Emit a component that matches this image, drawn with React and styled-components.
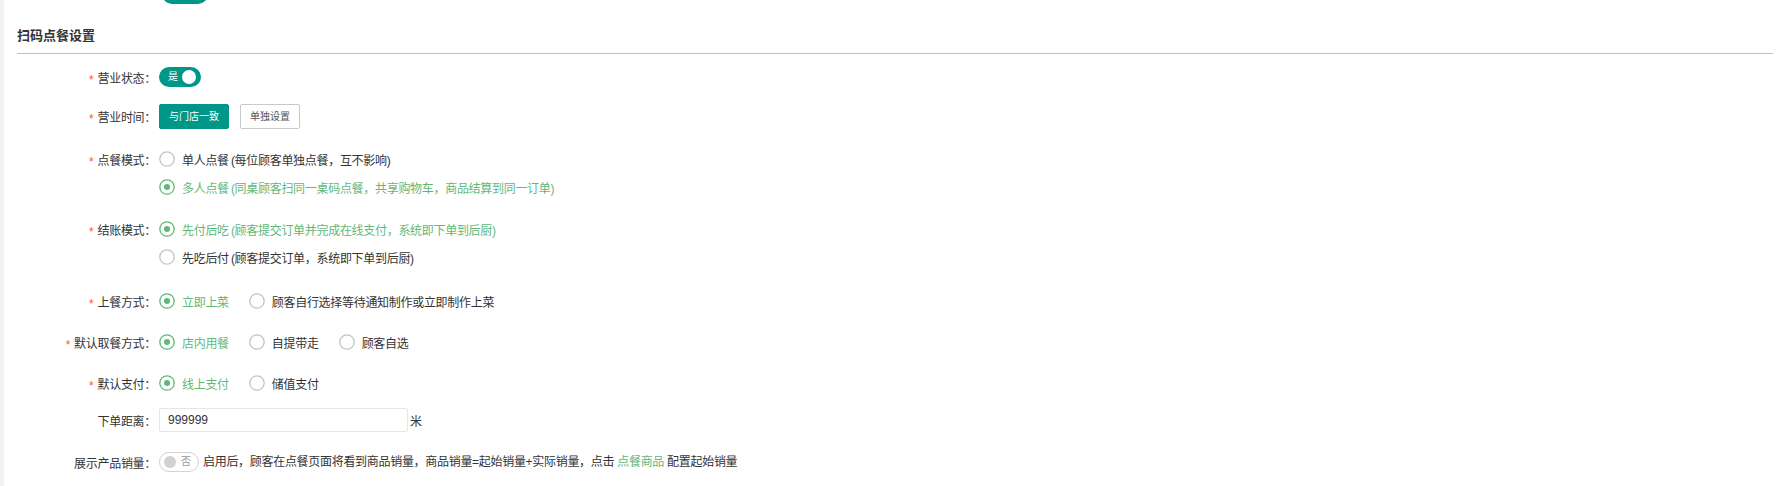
import React, { useState } from 'react'
import styled, { createGlobalStyle } from 'styled-components'

const TEAL = '#009688'
const GREEN = '#5FB878'

const GlobalStyle = createGlobalStyle`
  * { box-sizing: border-box; }
  html, body {
    margin: 0;
    padding: 0;
    background: #f2f2f2;
  }
  body {
    font-family: "Liberation Sans", "Noto Sans CJK SC", sans-serif;
    font-size: 12px;
    letter-spacing: -0.3px;
    color: #333;
    text-autospace: no-autospace;
    text-spacing-trim: space-all;
  }
`

function RadioGroup({ options, value, onChange, vertical }) {
    return (
        <Control $vertical={vertical}>
            {options.map((text, i) => (
                <Option key={text} $checked={value === i} onClick={() => onChange(i)}>
                    <RadioIcon width="16" height="16" viewBox="0 0 16 16">
                        <circle cx="8" cy="8" r="7.2" fill="#fff"
                            stroke={value === i ? GREEN : '#c2c2c2'} strokeWidth="1.3" />
                        {value === i && <circle cx="8" cy="8" r="3" fill={GREEN} />}
                    </RadioIcon>
                    {text}
                </Option>
            ))}
        </Control>
    )
}

function Switch({ on, onToggle, onText, offText }) {
    return (
        <SwitchBox $on={on} onClick={onToggle}>
            <SwitchText $on={on}>{on ? onText : offText}</SwitchText>
            <Knob $on={on} />
        </SwitchBox>
    )
}

function App() {
    const [open, setOpen] = useState(true)
    const [hours, setHours] = useState('store')
    const [orderMode, setOrderMode] = useState(1)
    const [payMode, setPayMode] = useState(0)
    const [serve, setServe] = useState(0)
    const [pickup, setPickup] = useState(0)
    const [payment, setPayment] = useState(0)
    const [distance, setDistance] = useState('999999')
    const [showSales, setShowSales] = useState(false)

    return (
        <Page>
            <GlobalStyle />
            <PrevRow><PrevPill /></PrevRow>
            <SectionTitle>扫码点餐设置</SectionTitle>
            <Form>
                <Item $gap={11}>
                    <Label><Star>*</Star>营业状态：</Label>
                    <Control>
                        <Switch on={open} onToggle={() => setOpen(!open)} onText="是" offText="否" />
                    </Control>
                </Item>
                <Item $gap={15}>
                    <Label><Star>*</Star>营业时间：</Label>
                    <Control>
                        <Button $primary={hours === 'store'} onClick={() => setHours('store')}>与门店一致</Button>
                        <Button $primary={hours === 'custom'} onClick={() => setHours('custom')}>单独设置</Button>
                    </Control>
                </Item>
                <Item $gap={14}>
                    <Label><Star>*</Star>点餐模式：</Label>
                    <RadioGroup vertical value={orderMode} onChange={setOrderMode} options={[
                        '单人点餐\u2009(每位顾客单独点餐，互不影响)',
                        '多人点餐\u2009(同桌顾客扫同一桌码点餐，共享购物车，商品结算到同一订单)',
                    ]} />
                </Item>
                <Item $gap={16}>
                    <Label><Star>*</Star>结账模式：</Label>
                    <RadioGroup vertical value={payMode} onChange={setPayMode} options={[
                        '先付后吃\u2009(顾客提交订单并完成在线支付，系统即下单到后厨)',
                        '先吃后付\u2009(顾客提交订单，系统即下单到后厨)',
                    ]} />
                </Item>
                <Item $gap={13}>
                    <Label><Star>*</Star>上餐方式：</Label>
                    <RadioGroup value={serve} onChange={setServe} options={[
                        '立即上菜',
                        '顾客自行选择等待通知制作或立即制作上菜',
                    ]} />
                </Item>
                <Item $gap={13}>
                    <Label><Star>*</Star>默认取餐方式：</Label>
                    <RadioGroup value={pickup} onChange={setPickup} options={['店内用餐', '自提带走', '顾客自选']} />
                </Item>
                <Item $gap={9}>
                    <Label><Star>*</Star>默认支付：</Label>
                    <RadioGroup value={payment} onChange={setPayment} options={['线上支付', '储值支付']} />
                </Item>
                <Item $gap={14}>
                    <Label>下单距离：</Label>
                    <Control>
                        <TextInput value={distance} onChange={(e) => setDistance(e.target.value)} />
                        <Unit>米</Unit>
                    </Control>
                </Item>
                <Item $gap={0}>
                    <Label>展示产品销量：</Label>
                    <Control>
                        <Switch on={showSales} onToggle={() => setShowSales(!showSales)} onText="是" offText="否" />
                        <Hint>启用后，顾客在点餐页面将看到商品销量，商品销量=起始销量+实际销量，点击 <HintLink href="#">点餐商品</HintLink> 配置起始销量</Hint>
                    </Control>
                </Item>
            </Form>
        </Page>
    )
}

const Page = styled.div`
    margin-left: 4px;
    min-height: 486px;
    background: #fff;
    padding: 0 6px 0 13px;
`

const PrevRow = styled.div`
    height: 4px;
    overflow: hidden;
    display: flex;
    align-items: flex-end;
    padding-left: 145px;
`

const PrevPill = styled.span`
    flex: none;
    width: 46px;
    height: 20px;
    border-radius: 10px;
    background: ${TEAL};
`

const SectionTitle = styled.h3`
    margin: 22px 0 0;
    padding-bottom: 7px;
    font-size: 13px;
    font-weight: bold;
    line-height: 20px;
    letter-spacing: 0;
    color: #333;
    border-bottom: 1px solid #c2c2c2;
`

const Form = styled.div`
    padding-top: 9px;
`

const Item = styled.div`
    display: flex;
    align-items: flex-start;
    margin-bottom: ${(p) => p.$gap}px;
`

const Label = styled.label`
    flex: none;
    display: flex;
    align-items: center;
    justify-content: flex-end;
    width: 142px;
    height: 28px;
    padding-right: 3px;
    white-space: nowrap;
    color: #333;
`

const Star = styled.span`
    height: 12px;
    margin: 6px 4px 0 0;
    line-height: 12px;
    color: #ff5722;
`

const Control = styled.div`
    display: flex;
    flex-direction: ${(p) => (p.$vertical ? 'column' : 'row')};
    align-items: ${(p) => (p.$vertical ? 'flex-start' : 'center')};
    min-height: 28px;
`

const Option = styled.label`
    display: flex;
    align-items: center;
    height: 28px;
    margin-right: 20px;
    white-space: nowrap;
    color: ${(p) => (p.$checked ? GREEN : '#333')};
    cursor: pointer;
`

const RadioIcon = styled.svg`
    flex: none;
    margin-right: 7px;
`

const SwitchBox = styled.span`
    flex: none;
    display: inline-flex;
    flex-direction: ${(p) => (p.$on ? 'row' : 'row-reverse')};
    justify-content: space-between;
    align-items: center;
    width: ${(p) => (p.$on ? 42 : 40)}px;
    height: 20px;
    padding: ${(p) => (p.$on ? '0 5px 0 9px' : '0 7px 0 4px')};
    border-radius: 10px;
    border: ${(p) => (p.$on ? 'none' : '1px solid #d2d2d2')};
    background: ${(p) => (p.$on ? TEAL : '#fff')};
    cursor: pointer;
`

const SwitchText = styled.span`
    font-size: 10px;
    line-height: 12px;
    letter-spacing: 0;
    color: ${(p) => (p.$on ? '#fff' : '#999')};
`

const Knob = styled.span`
    flex: none;
    width: ${(p) => (p.$on ? 14 : 12)}px;
    height: ${(p) => (p.$on ? 14 : 12)}px;
    border-radius: 50%;
    background: ${(p) => (p.$on ? '#fff' : '#d2d2d2')};
`

const Button = styled.button`
    height: 25px;
    padding: 0 9px;
    margin-right: 11px;
    font-family: inherit;
    font-size: 10px;
    line-height: 23px;
    letter-spacing: 0;
    border-radius: 2px;
    border: 1px solid ${(p) => (p.$primary ? TEAL : '#c9c9c9')};
    background: ${(p) => (p.$primary ? TEAL : '#fff')};
    color: ${(p) => (p.$primary ? '#fff' : '#555')};
    cursor: pointer;
`

const TextInput = styled.input`
    width: 249px;
    height: 24px;
    padding: 0 8px;
    border: 1px solid #e6e6e6;
    border-radius: 2px;
    font-family: inherit;
    font-size: 12px;
    letter-spacing: 0;
    color: #333;
    outline: none;
`

const Unit = styled.span`
    margin-left: 2px;
    color: #333;
`

const Hint = styled.span`
    margin-left: 4px;
    line-height: 28px;
    white-space: nowrap;
    color: #333;
`

const HintLink = styled.a`
    color: ${GREEN};
    text-decoration: none;
`

export default App
